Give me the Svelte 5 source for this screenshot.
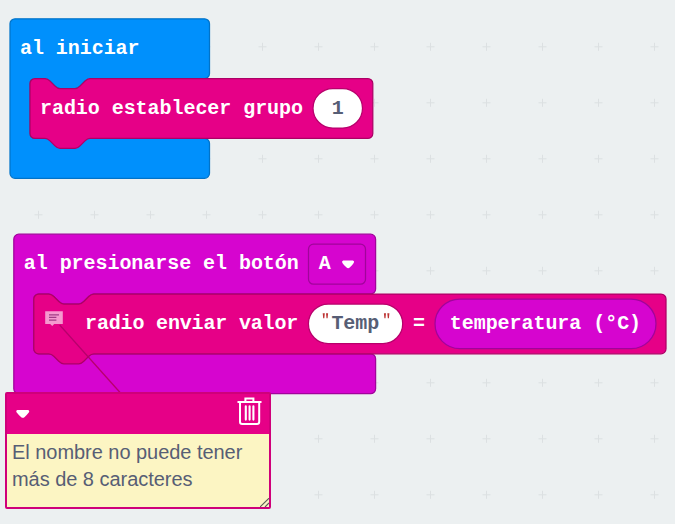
<script>
  const columns = Array.from({ length: 12 }, (_, i) => 38.5 + i * 56);
  const rows = Array.from({ length: 9 }, (_, i) => 46.8 + i * 56);

  const notch = 'c2.5 0 3.75 1.25 5 2.5l5 5c1.25 1.25 2.5 2.5 5 2.5h15c2.5 0 3.75 -1.25 5 -2.5l5 -5c1.25 -1.25 2.5 -2.5 5 -2.5';
  const notchBack = 'c-2.5 0 -3.75 1.25 -5 2.5l-5 5c-1.25 1.25 -2.5 2.5 -5 2.5h-15c-2.5 0 -3.75 -1.25 -5 -2.5l-5 -5c-1.25 -1.25 -2.5 -2.5 -5 -2.5';

  // Event block: a header, a statement slot and a footer.
  function hat(w) {
    return `M0 5a5 5 0 0 1 5 -5H${w - 5}a5 5 0 0 1 5 5V54.7a5 5 0 0 1 -5 5H80${notchBack}H25a5 5 0 0 0 -5 5V114.6a5 5 0 0 0 5 5H${w - 5}a5 5 0 0 1 5 5V154.5a5 5 0 0 1 -5 5H5a5 5 0 0 1 -5 -5Z`;
  }

  // Statement block with a notch above and a tab below.
  function statement(w) {
    return `M0 5a5 5 0 0 1 5 -5H15${notch}H${w - 5}a5 5 0 0 1 5 5V54.8a5 5 0 0 1 -5 5H60${notchBack}H5a5 5 0 0 1 -5 -5Z`;
  }
</script>

<main class="workspace">
  <svg class="canvas" width="675" height="524" viewBox="0 0 675 524">
    <g class="grid">
      {#each rows as y}
        {#each columns as x}
          <path d="M{x - 4} {y}h8M{x} {y - 4}v8" />
        {/each}
      {/each}
    </g>

    <g transform="translate(10 18.8)">
      <path class="start" d={hat(199.5)} />
      <text x="10" y="35">al iniciar</text>
      <g transform="translate(20 59.8)">
        <path class="radio" d={statement(342.8)} />
        <text x="10" y="35.2">radio establecer grupo</text>
        <rect class="field" x="283" y="10" width="49.5" height="39.5" rx="19.75" />
        <text class="value" x="301.8" y="35.2">1</text>
      </g>
    </g>

    <g transform="translate(13.8 234.2)">
      <path class="input" d={hat(361.8)} />
      <text x="10" y="34.8">al presionarse el botón</text>
      <rect class="input" x="294.7" y="10" width="57" height="40" rx="5" />
      <text x="305" y="34.8">A</text>
      <path class="caret" transform="translate(328 26.2)" d="M1.4 0H11.2Q13.1 .8 11.9 2.6Q10.4 5 8.2 6.9Q6.3 8.8 4.5 6.9Q2.2 5 .6 2.6Q-.5 .8 1.4 0Z" />
      <g transform="translate(20 59.8)">
        <path class="radio" d={statement(632.2)} />
        <g transform="translate(11.4 17.3)">
          <path class="bubble" d="M0 0H17.6V12.7H9L7 14.8L5 12.7H0Z" />
          <path class="lines" d="M3.8 3.6H13.8M3.8 6.2H11.2M3.8 8.8H11.2" />
        </g>
        <text class="tight" x="51.3" y="35">radio enviar valor</text>
        <rect class="field" x="274.6" y="10" width="94.3" height="39.5" rx="19.75" />
        <path class="quotes" d="M288.9 19.3h2.1l-.5 5h-1.1zM292.2 19.3h2.1l-.5 5h-1.1zM350.1 19.3h2.1l-.5 5h-1.1zM353.5 19.3h2.1l-.5 5h-1.1z" />
        <text class="value" x="297.6" y="35">Temp</text>
        <text x="379.2" y="35">=</text>
        <rect class="input" x="401.2" y="5" width="221" height="49.7" rx="24.85" />
        <text x="416" y="35">temperatura (°C)</text>
      </g>
    </g>
    <path class="leader" d="M59.7 325L120.5 393" />
  </svg>

  <section class="comment">
    <header>
      <svg width="14" height="9" viewBox="0 0 14 9"><path class="caret" d="M1.4 0H12.1Q14 .8 12.8 2.6Q11 5 8.7 6.9Q6.8 8.8 5 6.9Q2.5 5 .7 2.6Q-.5 .8 1.4 0Z" /></svg>
      <svg class="trash" width="25" height="30" viewBox="0 0 25 30">
        <path d="M.5 5H24.5M8.4 5V1.4H16.4V5M3 6V24.8Q3 27 5.2 27H20Q22.2 27 22.2 24.8V6" />
        <path class="bars" d="M8.8 9.2V22.6M12.6 9.2V22.6M16.4 9.2V22.6" />
      </svg>
    </header>
    <p>El nombre no puede tener<br />más de 8 caracteres</p>
    <svg class="grip" width="9" height="9" viewBox="0 0 9 9"><path d="M0 9L9 .2M5 9L9 5" /></svg>
  </section>
</main>

<style>
  :global(body) { margin: 0; }
  .workspace {
    position: relative;
    width: 675px;
    height: 524px;
    overflow: hidden;
    background: #ecf0f1;
  }
  svg { display: block; }
  text {
    font: bold 20px "Liberation Mono", monospace;
    letter-spacing: -0.05px;
    fill: #fff;
    white-space: pre;
  }
  .tight { letter-spacing: -0.17px; }
  .grid path { stroke: #dce0e2; stroke-width: 1; }
  .start { fill: #0090fc; stroke: #0073c9; stroke-width: 1.25; }
  .radio { fill: #e60087; stroke: #ad0065; stroke-width: 1.25; }
  .input { fill: #d605cf; stroke: #a1049b; stroke-width: 1.25; }
  .field { fill: #fff; stroke: #b8006c; stroke-width: 1.25; }
  .value { fill: #575e75; }
  .caret { fill: #fff; }
  .quotes { fill: #bd3434; }
  .bubble { fill: #f599cf; }
  .lines { fill: none; stroke: #a13c87; stroke-width: 1.25; }
  .leader { stroke: #b8006c; stroke-width: 1.25; }
  .comment {
    position: absolute;
    left: 5px;
    top: 392px;
    box-sizing: border-box;
    width: 265.5px;
    height: 117px;
    border: 2px solid #cf007a;
    border-radius: 2px;
    background: #fcf5c3;
    font: 20px/27px "Liberation Sans", sans-serif;
    letter-spacing: -0.04px;
    color: #575e75;
  }
  header {
    display: flex;
    justify-content: space-between;
    box-sizing: border-box;
    height: 39.5px;
    padding: 3px 7px 0 9px;
    background: #e60087;
  }
  header > svg:first-child { margin-top: 13px; }
  .trash path { fill: none; stroke: #fff; stroke-width: 2; }
  .trash .bars { stroke-width: 2.1; stroke-linecap: round; }
  p { margin: 0; padding: 5.5px 5px 0; white-space: nowrap; }
  .grip { position: absolute; right: 0; bottom: 0; }
  .grip path { stroke: #575e55; stroke-width: 1.1; }
</style>
